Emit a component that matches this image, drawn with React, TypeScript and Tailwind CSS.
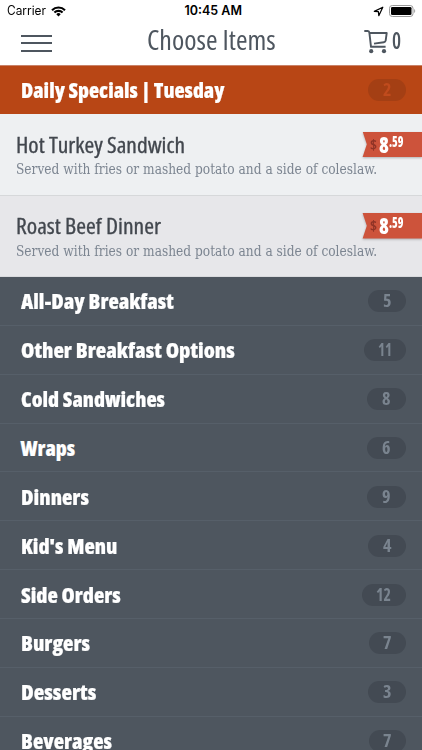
import { useLayoutEffect, useRef, useState } from 'react';

const sans = "font-['Open_Sans','Noto_Sans',sans-serif] [font-stretch:75%]";

type FitProps = { text: string; width: number; className?: string };

// Condenses a single line of text to an exact width.
function Fit({ text, width, className = '' }: FitProps) {
  const ref = useRef<HTMLSpanElement>(null);
  const [scale, setScale] = useState(1);
  useLayoutEffect(() => {
    const measure = () => {
      if (ref.current) setScale(width / ref.current.offsetWidth);
    };
    measure();
    document.fonts?.ready.then(measure);
  }, [width, text]);
  return (
    <span className={`block shrink-0 ${className}`} style={{ width }}>
      <span
        ref={ref}
        className="inline-block origin-left whitespace-nowrap"
        style={{ transform: `scaleX(${scale})` }}
      >
        {text}
      </span>
    </span>
  );
}

function StatusBar() {
  return (
    <div className="flex h-[22px] items-center pl-[7px] pr-[6px] font-['Inter',sans-serif] text-[12.5px] leading-[22px] text-black">
      <Fit text="Carrier" width={39} />
      <svg className="ml-[5px] h-[11px] w-[15px]" viewBox="0 0 15 11" fill="none" stroke="#000" strokeWidth="2.1">
        <path d="M1 4.2a9.2 9.2 0 0 1 13 0" />
        <path d="M3.4 6.6a5.8 5.8 0 0 1 8.2 0" />
        <path d="M7.5 10.4 5.3 8.2a3.1 3.1 0 0 1 4.4 0z" fill="#000" stroke="none" />
      </svg>
      <Fit text="10:45 AM" width={57} className="ml-[118.5px] font-semibold" />
      <svg className="ml-auto h-[11px] w-[11px]" viewBox="0 0 11 11" fill="none" stroke="#000" strokeWidth="1.2" strokeLinejoin="round">
        <path d="M1.3 5.4 9.8 1.2 5.8 9.7 5.4 5.6z" />
      </svg>
      <svg className="ml-[5px] h-[12px] w-[27px]" viewBox="0 0 27 12">
        <rect x=".5" y=".5" width="23.5" height="11" rx="2.8" fill="#fff" stroke="#999" />
        <rect x="2" y="2" width="20.5" height="8" rx="1.3" fill="#000" />
        <path d="M25.2 4v4c1.3-.6 1.3-3.4 0-4z" fill="#999" />
      </svg>
    </div>
  );
}

function Header() {
  return (
    <div className={`flex h-[43px] items-start pl-[21px] text-[#4e565f] ${sans}`}>
      <div className="mt-[12.5px] flex w-[31px] flex-col gap-[5.5px]">
        <div className="h-[2px] bg-[#4e565f]" />
        <div className="h-[2px] bg-[#4e565f]" />
        <div className="h-[2px] bg-[#4e565f]" />
      </div>
      <Fit text="Choose Items" width={128.5} className="ml-[94.5px] text-[26.5px] leading-[37px]" />
      <svg className="ml-[89px] mt-[7px] h-[25px] w-[24px]" viewBox="0 0 24 25" fill="none" stroke="#4e565f" strokeWidth="1.9">
        <path d="M.3 2h3.5q1.4 0 1.6 1.8L7 17.8h14.6M5.5 4h17.2l-1 7.4q-.2 1.6-1.8 1.8L10 14.6" strokeLinejoin="round" />
        <circle cx="7.2" cy="22.2" r="2.1" fill="#4e565f" stroke="none" />
        <circle cx="20" cy="22.2" r="2.1" fill="#4e565f" stroke="none" />
      </svg>
      <Fit text="0" width={9.5} className="ml-[4px] text-[23.5px] leading-[36px] font-semibold" />
    </div>
  );
}

type Category = { name: string; width: number; count: string; badge: number };

const daily: Category = { name: 'Daily Specials | Tuesday', width: 203, count: '2', badge: 38 };

const categories: Category[] = [
  { name: 'All-Day Breakfast', width: 153, count: '5', badge: 38 },
  { name: 'Other Breakfast Options', width: 213.5, count: '11', badge: 42.5 },
  { name: 'Cold Sandwiches', width: 143.5, count: '8', badge: 39.5 },
  { name: 'Wraps', width: 55, count: '6', badge: 39.5 },
  { name: 'Dinners', width: 67.5, count: '9', badge: 39.5 },
  { name: "Kid's Menu", width: 96.5, count: '4', badge: 38.5 },
  { name: 'Side Orders', width: 99.5, count: '12', badge: 44.5 },
  { name: 'Burgers', width: 68.5, count: '7', badge: 37.5 },
  { name: 'Desserts', width: 75.5, count: '3', badge: 38 },
  { name: 'Beverages', width: 90.5, count: '7', badge: 37.5 },
];

function Row({ item, active = false }: { item: Category; active?: boolean }) {
  return (
    <div
      className={`flex shrink-0 items-center justify-between pl-[20.5px] pr-[16px] font-bold ${sans} ${
        active
          ? 'h-[49px] border-t border-[#c98268] bg-[#b84615]'
          : 'h-[48.87px] border-b border-[#565f69] bg-[#4e565f] pt-[1px]'
      }`}
    >
      <Fit text={item.name} width={item.width} className="text-[21px] leading-[28px] font-extrabold text-white [-webkit-text-stroke:0.2px_#fff]" />
      <div
        className={`flex h-[22px] items-center justify-center rounded-full text-[17px] leading-[22px] ${
          active ? 'bg-[#a43f14] text-[#c04b1d]' : 'bg-[#434a53] text-[#7a848f]'
        }`}
        style={{ width: item.badge }}
      >
        <Fit text={item.count} width={item.count.length === 1 ? 8.5 : item.count === '11' ? 14 : 15} />
      </div>
    </div>
  );
}

function Special({ name, width, alt = false }: { name: string; width: number; alt?: boolean }) {
  return (
    <div
      className={`relative shrink-0 border-b pl-[16px] ${
        alt ? 'h-[81px] border-[#d9dadd] bg-[#e7e7ea]' : 'h-[82px] border-[#d6d8da] bg-[#eef0f2]'
      }`}
    >
      <Fit text={name} width={width} className={`${alt ? 'pt-[16px]' : 'pt-[17px]'} text-[21px] leading-[28px] font-medium text-[#42474e] [-webkit-text-stroke:0.3px_#42474e] ${sans}`} />
      <Fit
        text="Served with fries or mashed potato and a side of coleslaw."
        width={361.5}
        className={`${alt ? 'mt-[2px]' : 'mt-[1px]'} font-['DejaVu_Serif',serif] text-[14.5px] leading-[18px] text-[#7c8591]`}
      />
      <div className={`absolute right-0 h-[26px] w-[60px] drop-shadow-[0_1px_1px_rgba(0,0,0,0.25)] ${alt ? 'top-[17px]' : 'top-[17.5px]'}`}>
        <div className={`flex h-[25.5px] items-start bg-[#cd533b] pl-[8px] font-bold text-white [clip-path:polygon(1%_0,100%_0,100%_100%,1%_100%,8%_50%)] ${sans}`}>
          <Fit text="$" width={7.5} className="text-[14px] leading-[26px] text-[#8f3326]" />
          <Fit text="8" width={10} className="ml-[1px] text-[22px] leading-[25px] font-extrabold" />
          <Fit text=".59" width={14.5} className="text-[15px] leading-[18px] font-extrabold" />
        </div>
      </div>
    </div>
  );
}

export default function App() {
  return (
    <div className="flex h-[750px] w-[422px] flex-col overflow-hidden bg-[#4e565f]">
      <div className="h-[65px] shrink-0 bg-white">
        <StatusBar />
        <Header />
      </div>
      <Row item={daily} active />
      <Special name="Hot Turkey Sandwich" width={168.5} />
      <Special name="Roast Beef Dinner" width={145} alt />
      {categories.map((c) => (
        <Row key={c.name} item={c} />
      ))}
    </div>
  );
}
